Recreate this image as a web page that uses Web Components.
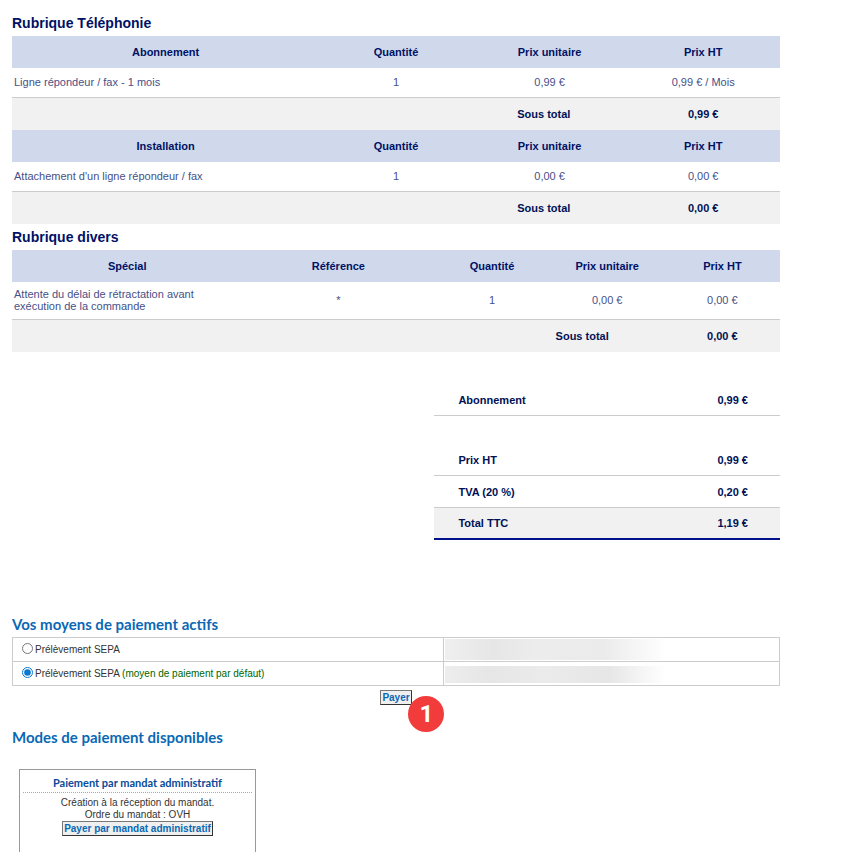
<!DOCTYPE html>
<html lang="fr">
<head>
<meta charset="utf-8">
<title>Bon de commande</title>
<style>
    body {
        margin: 0;
        background: #fff;
        color: #333;
        font-family: "Liberation Sans", Arial, sans-serif;
        font-size: 11px;
    }
</style>
</head>
<body>
<order-page>
    <order-section heading="Rubrique Téléphonie" data-key="telephonie"></order-section>
    <order-section heading="Rubrique divers" data-key="divers"></order-section>
    <order-totals></order-totals>
    <payment-methods heading="Vos moyens de paiement actifs">
        <step-badge slot="badge">1</step-badge>
    </payment-methods>
    <payment-modes heading="Modes de paiement disponibles">
        <payment-card heading="Paiement par mandat administratif" action="Payer par mandat administratif">
            Création à la réception du mandat.<br>Ordre du mandat : OVH
        </payment-card>
    </payment-modes>
</order-page>

<script>
const sections = {
    telephonie: [
        {
            widths: [40, 20, 20, 20],
            head: ['Abonnement', 'Quantité', 'Prix unitaire', 'Prix HT'],
            row: ['Ligne répondeur / fax - 1 mois', '1', '0,99 €', '0,99 € / Mois'],
            total: '0,99 €'
        },
        {
            widths: [40, 20, 20, 20],
            head: ['Installation', 'Quantité', 'Prix unitaire', 'Prix HT'],
            row: ["Attachement d'un ligne répondeur / fax", '1', '0,00 €', '0,00 €'],
            total: '0,00 €'
        }
    ],
    divers: [
        {
            widths: [30, 25, 15, 15, 15],
            head: ['Spécial', 'Référence', 'Quantité', 'Prix unitaire', 'Prix HT'],
            row: ['Attente du délai de rétractation avant exécution de la commande', '*', '1', '0,00 €', '0,00 €'],
            total: '0,00 €'
        }
    ]
};

const buttonStyle = `
    button {
        margin: 0;
        padding: 0 1px;
        border: 1px solid #333;
        border-top-color: #777;
        border-left-color: #777;
        border-radius: 0;
        background: #efefef;
        color: #0a68b4;
        font: bold 10px/13px "Liberation Sans", Arial, sans-serif;
        cursor: pointer;
    }
`;

const headingStyle = `
    h2 {
        margin: 0;
        color: #0a68b4;
        font: bold 15px/25px Lato, "Trebuchet MS", sans-serif;
    }
`;

class OrderPage extends HTMLElement {
    constructor() {
        super();
        this.attachShadow({mode: 'open'});
        this.shadowRoot.innerHTML = `
            <style>
                :host {
                    display: block;
                    padding: 10px 64px 0 12px;
                }
            </style>
            <main><slot></slot></main>`;
    }
}

class OrderSection extends HTMLElement {
    constructor() {
        super();
        this.attachShadow({mode: 'open'});
    }

    connectedCallback() {
        const tables = sections[this.dataset.key].map((t) => `
            <table>
                <colgroup>${t.widths.map((w) => `<col style="width: ${w}%">`).join('')}</colgroup>
                <thead><tr>${t.head.map((h) => `<th scope="col">${h}</th>`).join('')}</tr></thead>
                <tbody><tr>${t.row.map((c) => `<td>${c}</td>`).join('')}</tr></tbody>
                <tfoot>
                    <tr>
                        <th scope="row" colspan="${t.head.length - 1}">Sous total</th>
                        <td>${t.total}</td>
                    </tr>
                </tfoot>
            </table>`).join('');

        this.shadowRoot.innerHTML = `
            <style>
                :host {
                    display: block;
                }

                h2 {
                    margin: 0;
                    color: #001166;
                    font-size: 14px;
                    line-height: 26px;
                }

                table {
                    width: 100%;
                    table-layout: fixed;
                    border-collapse: separate;
                    border-spacing: 0;
                    line-height: 12px;
                    text-align: center;
                }

                th, td {
                    box-sizing: border-box;
                    height: 32px;
                    padding: 0 2px;
                }

                thead th {
                    background: #cfd9eb;
                    color: #001166;
                }

                tbody td {
                    height: 30px;
                    padding: 6px 2px 7px;
                    border-bottom: 1px solid #ccc;
                    color: #475088;
                }

                tbody td:first-child {
                    padding-right: 32px;
                    text-align: left;
                }

                tfoot th, tfoot td {
                    background: #f1f1f1;
                    color: #001155;
                    font-weight: bold;
                }

                tfoot th {
                    padding-right: 56px;
                    text-align: right;
                }
            </style>
            <h2>${this.getAttribute('heading')}</h2>
            ${tables}`;
    }
}

class OrderTotals extends HTMLElement {
    constructor() {
        super();
        this.attachShadow({mode: 'open'});
        this.shadowRoot.innerHTML = `
            <style>
                :host {
                    display: block;
                    width: 45%;
                    margin: 32px 0 72px auto;
                    color: #001155;
                }

                table {
                    width: 100%;
                    border-spacing: 0;
                    line-height: 12px;
                }

                table + table {
                    margin-top: 28px;
                }

                th, td {
                    box-sizing: border-box;
                    height: 32px;
                    padding: 0 32px 0 24px;
                    border-bottom: 1px solid #ccc;
                    text-align: left;
                    font-weight: bold;
                }

                td {
                    text-align: right;
                }

                .total th, .total td {
                    border-bottom: 2px solid #00118a;
                    background: #f1f1f1;
                }
            </style>
            <table>
                <tr><th scope="row">Abonnement</th><td>0,99 €</td></tr>
            </table>
            <table>
                <tr><th scope="row">Prix HT</th><td>0,99 €</td></tr>
                <tr><th scope="row">TVA (20 %)</th><td>0,20 €</td></tr>
                <tr class="total"><th scope="row">Total TTC</th><td>1,19 €</td></tr>
            </table>`;
    }
}

class PaymentMethods extends HTMLElement {
    constructor() {
        super();
        this.attachShadow({mode: 'open'});
    }

    connectedCallback() {
        this.shadowRoot.innerHTML = `
            <style>
                :host {
                    display: block;
                    margin-bottom: 20px;
                }

                ${headingStyle}
                ${buttonStyle}

                table {
                    width: 100%;
                    table-layout: fixed;
                    border-collapse: collapse;
                    font-size: 10px;
                    line-height: 12px;
                }

                td {
                    height: 23px;
                    padding: 0;
                    border: 1px solid #ccc;
                }

                td:first-child {
                    width: 56%;
                }

                label {
                    display: flex;
                    align-items: center;
                    gap: 2px;
                    padding-left: 9px;
                }

                input {
                    width: 11px;
                    height: 11px;
                    margin: 0 0 3px;
                    accent-color: #0a78d0;
                }

                .default {
                    color: #006600;
                }

                .masked {
                    width: 66%;
                    height: 21px;
                    margin: 0 0 1px 1px;
                    background: linear-gradient(90deg, #efefef, #e6e6e6 22%, #ececec 40%, #ebebeb 72%, #f3f3f3 83%, #fff);
                }

                .masked.short {
                    height: 17px;
                    margin-top: 2px;
                    background: linear-gradient(90deg, #ededed, #e6e6e6 20%, #ebebeb 45%, #e6e6e6 74%, #f3f3f3 87%, #fff);
                }

                .actions {
                    padding-top: 4px;
                    text-align: center;
                    line-height: 0;
                }

                .anchor {
                    display: inline-block;
                    position: relative;
                }

                ::slotted([slot="badge"]) {
                    position: absolute;
                    top: 6px;
                    left: 28px;
                }
            </style>
            <h2>${this.getAttribute('heading')}</h2>
            <table>
                <tr>
                    <td><label><input type="radio" name="mean"><span>Prélèvement SEPA</span></label></td>
                    <td><div class="masked"></div></td>
                </tr>
                <tr>
                    <td><label><input type="radio" name="mean" checked><span>Prélèvement SEPA <span class="default">(moyen de paiement par défaut)</span></span></label></td>
                    <td><div class="masked short"></div></td>
                </tr>
            </table>
            <div class="actions">
                <span class="anchor"><button type="button">Payer</button><slot name="badge"></slot></span>
            </div>`;
    }
}

class StepBadge extends HTMLElement {
    constructor() {
        super();
        this.attachShadow({mode: 'open'});
        this.shadowRoot.innerHTML = `
            <style>
                :host {
                    display: flex;
                    align-items: center;
                    justify-content: center;
                    width: 36px;
                    height: 36px;
                    border-radius: 50%;
                    background: #f23b3b;
                    color: #fff;
                    font: bold 24px/36px Roboto, sans-serif;
                }
            </style>
            <slot></slot>`;
    }
}

class PaymentModes extends HTMLElement {
    constructor() {
        super();
        this.attachShadow({mode: 'open'});
    }

    connectedCallback() {
        this.shadowRoot.innerHTML = `
            <style>
                :host {
                    display: block;
                }

                ${headingStyle}

                .cards {
                    display: flex;
                    flex-wrap: wrap;
                    gap: 16px;
                    padding: 19px 7px 0;
                }
            </style>
            <h2>${this.getAttribute('heading')}</h2>
            <div class="cards"><slot></slot></div>`;
    }
}

class PaymentCard extends HTMLElement {
    constructor() {
        super();
        this.attachShadow({mode: 'open'});
    }

    connectedCallback() {
        this.shadowRoot.innerHTML = `
            <style>
                :host {
                    display: block;
                    box-sizing: border-box;
                    width: 237px;
                    min-height: 100px;
                    padding: 3px;
                    border: 1px solid #999;
                    text-align: center;
                    font-size: 10px;
                    line-height: 12px;
                }

                ${buttonStyle}

                h3 {
                    margin: 0 0 4px;
                    border-bottom: 1px dotted #aaa;
                    color: #0a4a98;
                    font: bold 11px/19px Lato, "Trebuchet MS", sans-serif;
                }

                p {
                    margin: 0;
                }

                button {
                    display: block;
                    margin: 0 auto;
                }
            </style>
            <h3>${this.getAttribute('heading')}</h3>
            <p><slot></slot></p>
            <button type="button">${this.getAttribute('action')}</button>`;
    }
}

window.customElements.define('order-page', OrderPage);
window.customElements.define('order-section', OrderSection);
window.customElements.define('order-totals', OrderTotals);
window.customElements.define('payment-methods', PaymentMethods);
window.customElements.define('step-badge', StepBadge);
window.customElements.define('payment-modes', PaymentModes);
window.customElements.define('payment-card', PaymentCard);
</script>
</body>
</html>
